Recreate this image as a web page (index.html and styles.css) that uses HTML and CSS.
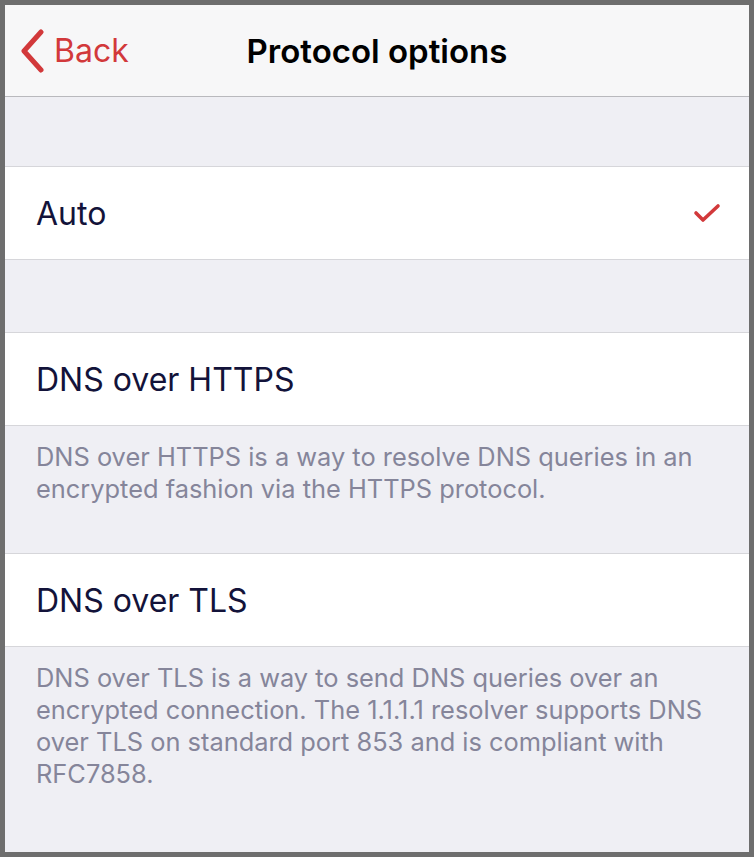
FILE: index.html
```html
<!DOCTYPE html>
<html>
<head>
<meta charset="utf-8">
<link rel="stylesheet" href="styles.css">
</head>
<body>
<div class="screen">
  <header class="navbar">
    <div class="back">
      <svg class="chevron" width="26" height="44" viewBox="0 0 26 44"><path d="M22 3 L5 22 L22 41" fill="none" stroke="#d2393b" stroke-width="5" stroke-linecap="round" stroke-linejoin="round"/></svg>
      <span>Back</span>
    </div>
    <div class="title">Protocol options</div>
  </header>
  <div class="spacer first"></div>
  <div class="row">
    <span>Auto</span>
    <svg class="check" width="28" height="22" viewBox="0 0 28 22"><path d="M3 11 L10 18 L25 4" fill="none" stroke="#d2393b" stroke-width="3.6" stroke-linecap="round" stroke-linejoin="round"/></svg>
  </div>
  <div class="spacer second"></div>
  <div class="row"><span>DNS over HTTPS</span></div>
  <div class="footer short">DNS over HTTPS is a way to resolve DNS queries in an encrypted fashion via the HTTPS protocol.</div>
  <div class="row"><span>DNS over TLS</span></div>
  <div class="footer long">DNS over TLS is a way to send DNS queries over an encrypted connection. The 1.1.1.1 resolver supports DNS over TLS on standard port 853 and is compliant with RFC7858.</div>
</div>
</body>
</html>
```

FILE: styles.css
```css
html, body {
  margin: 0;
  padding: 0;
  background: #6e6e6e;
}
body {
  padding: 5px;
  width: 754px;
  height: 857px;
  box-sizing: border-box;
  font-family: Inter, "Liberation Sans", sans-serif;
}
.screen {
  width: 744px;
  height: 847px;
  background: #efeff4;
  overflow: hidden;
}
.navbar {
  height: 91px;
  background: #f7f7f8;
  border-bottom: 1px solid #b9b9bd;
  position: relative;
  display: flex;
  align-items: center;
}
.back {
  display: flex;
  align-items: center;
  gap: 9px;
  padding-left: 14px;
  color: #d2393b;
  font-size: 32px;
}
.title {
  position: absolute;
  left: 0;
  right: 0;
  top: 0;
  bottom: 0;
  display: flex;
  align-items: center;
  justify-content: center;
  font-size: 33px;
  font-weight: 600;
  color: #000;
  pointer-events: none;
}
.spacer.first { height: 69px; }
.spacer.second { height: 72px; }
.row {
  height: 92px;
  background: #fff;
  border-top: 1px solid #d6d6da;
  border-bottom: 1px solid #d6d6da;
  display: flex;
  align-items: center;
  justify-content: space-between;
  padding: 0 28px 0 31px;
  font-size: 32px;
  color: #13133a;
}
.footer {
  padding: 15px 31px 0 31px;
  font-size: 25.4px;
  line-height: 32px;
  color: #85859a;
  box-sizing: border-box;
}
.footer.short { height: 127px; }
```
